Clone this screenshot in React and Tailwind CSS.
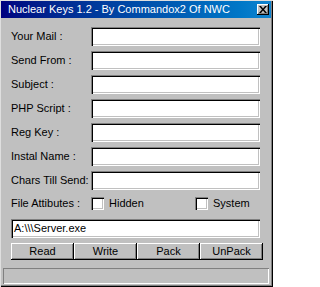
import React from "react";

const font = { fontFamily: '"Liberation Sans", Arial, sans-serif' };

const sunken =
  "bg-white shadow-[inset_1px_1px_#808080,inset_2px_2px_#000,inset_-1px_-1px_#fff,inset_-2px_-2px_#c0c0c0]";

const Field = ({ label }) => (
  <div className="flex items-center h-[19px]">
    <div className="w-[80px] text-[11px] leading-none text-black whitespace-nowrap">{label}</div>
    <div className={`w-[169px] h-[19px] ${sunken}`} />
  </div>
);

const Check = ({ label }) => (
  <div className="flex items-center">
    <div className={`w-[13px] h-[13px] ${sunken}`} />
    <span className="ml-[5px] text-[11px] leading-none text-black">{label}</span>
  </div>
);

const Button = ({ children }) => (
  <button className="flex-1 h-[17px] flex items-center justify-center bg-[#c0c0c0] text-[11px] leading-none text-black shadow-[inset_-1px_-1px_#000,inset_1px_1px_#fff,inset_-2px_-2px_#808080]">
    {children}
  </button>
);

export default function App() {
  const fields = [
    "Your Mail :",
    "Send From :",
    "Subject :",
    "PHP Script :",
    "Reg Key :",
    "Instal Name :",
    "Chars Till Send:",
  ];

  return (
    <div
      style={font}
      className="w-[273px] h-[287px] bg-[#c0c0c0] flex flex-col pt-[1px] pl-[1px] pr-[2px] pb-[2px] shadow-[inset_1px_1px_#dfdfdf,inset_-1px_-1px_#000,inset_-2px_-2px_#808080]"
    >
      {/* title bar */}
      <div className="h-[17px] flex items-center pl-[7px] pr-[2px] bg-gradient-to-r from-[#000080] to-[#1084d0]">
        <span className="flex-1 text-white text-[11px] leading-none whitespace-nowrap">
          Nuclear Keys 1.2 - By Commandox2 Of NWC
        </span>
        <div className="w-[12px] h-[11px] bg-[#c0c0c0] flex items-center justify-center shadow-[inset_-1px_-1px_#000,inset_1px_1px_#fff,inset_-2px_-2px_#808080]">
          <svg width="8" height="7" viewBox="0 0 8 7" className="-mt-[1px]">
            <path d="M0 0h2l2 2.5L6 0h2L5 3.5 8 7H6L4 4.5 2 7H0l3-3.5z" fill="#000" />
          </svg>
        </div>
      </div>

      <div className="flex flex-col px-[10px] pt-[9px]">
        <div className="flex flex-col gap-[5px]">
          {fields.map((f) => (
            <Field key={f} label={f} />
          ))}
        </div>

        <div className="flex items-center h-[13px] mt-[7px]">
          <div className="w-[80px] text-[11px] leading-none text-black whitespace-nowrap">File Attibutes :</div>
          <div className="w-[104px]">
            <Check label="Hidden" />
          </div>
          <Check label="System" />
        </div>

        <div className={`mt-[9px] w-[249px] h-[19px] flex items-center pl-[3px] text-[11px] leading-none text-black ${sunken}`}>
          {"A:\\\\\\Server.exe"}
        </div>

        <div className="mt-[5px] w-[252px] flex">
          <Button>Read</Button>
          <Button>Write</Button>
          <Button>Pack</Button>
          <Button>UnPack</Button>
        </div>
      </div>

      <div className="mt-[8px] mx-[2px] h-[16px] shadow-[inset_1px_1px_#808080,inset_-1px_-1px_#fff]" />
    </div>
  );
}
